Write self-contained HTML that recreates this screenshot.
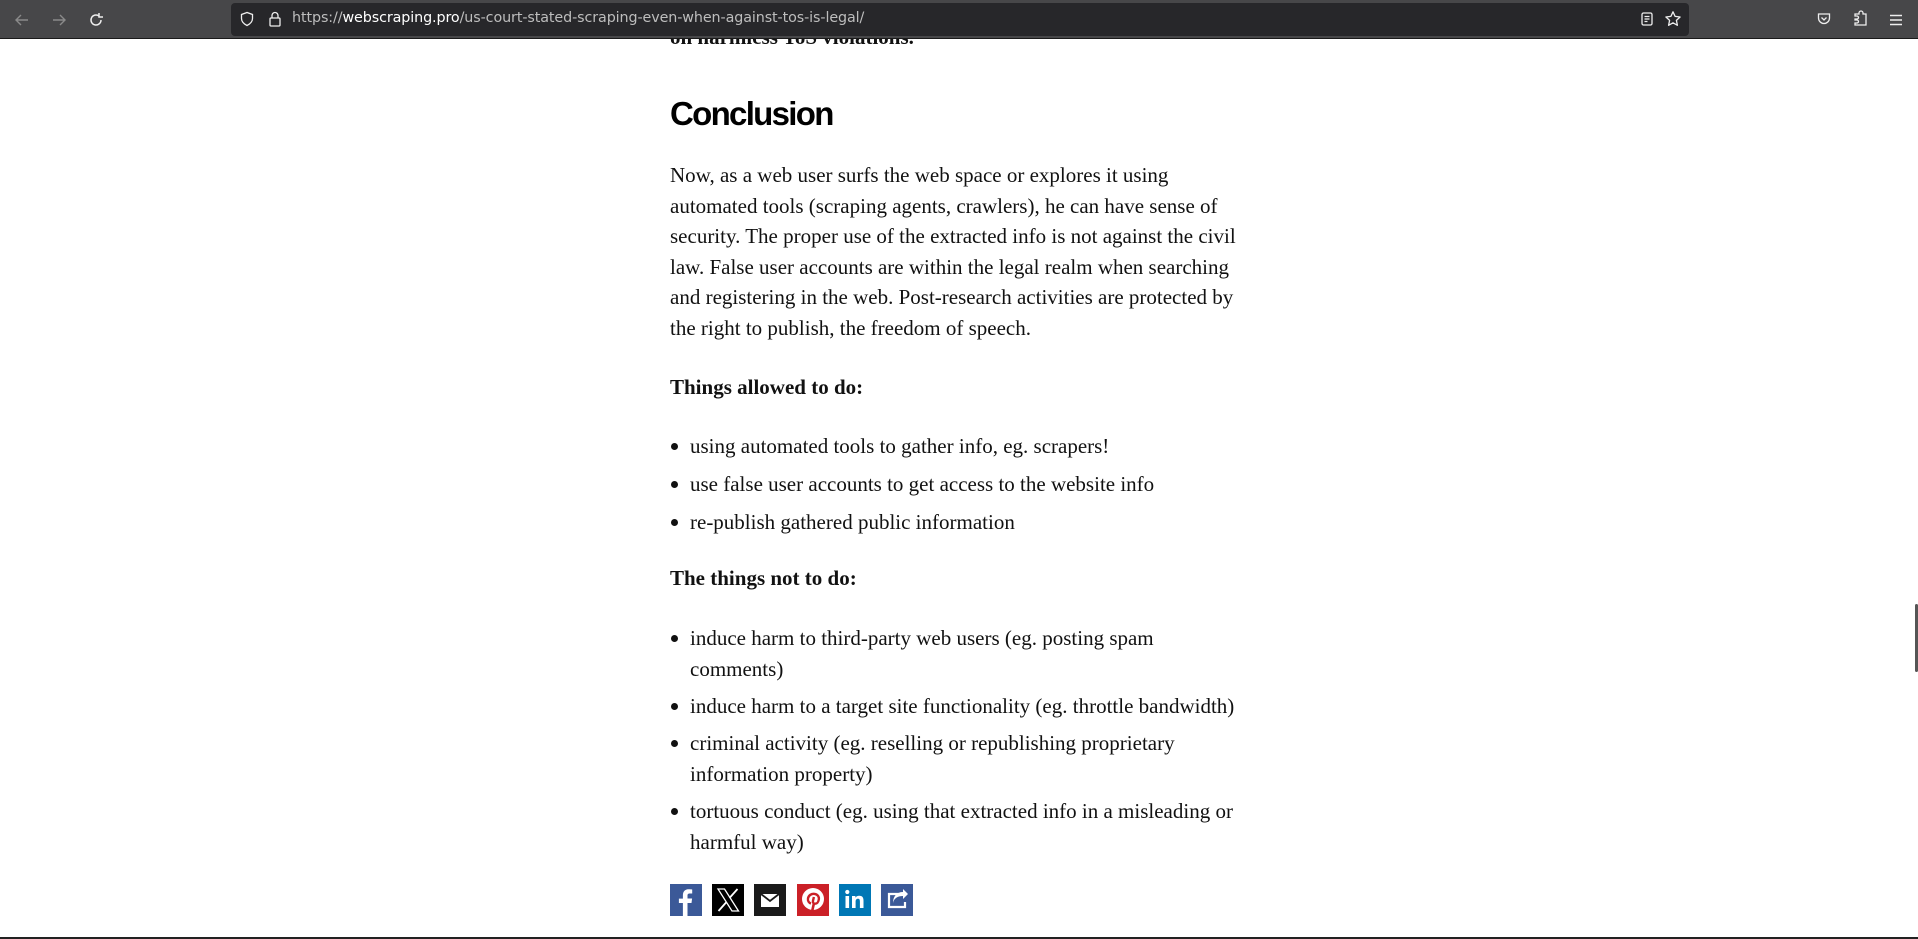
<!DOCTYPE html>
<html><head><meta charset="utf-8"><style>
*{margin:0;padding:0;box-sizing:border-box}
html,body{width:1918px;height:939px;overflow:hidden;background:#fff}
body{position:relative;font-family:"Liberation Serif",serif;color:#111;font-size:21px}
.bar{position:absolute;left:0;top:0;width:1918px;height:39px;background:#474749;border-bottom:1px solid #1a1a1a;z-index:5}
.url{position:absolute;left:231px;top:3px;width:1458px;height:33px;background:#27272a;border-radius:4px}
.urltxt{position:absolute;left:292px;top:10px;font-family:"DejaVu Sans","Liberation Sans",sans-serif;font-size:14.3px;color:#bdbdbd;letter-spacing:-0.1px}
.urltxt b{color:#fff;font-weight:normal}
.l{position:absolute;left:670px;line-height:30.6px;white-space:nowrap}
h2{position:absolute;left:670px;top:92px;font-family:"Liberation Sans",sans-serif;font-size:33px;font-weight:bold;letter-spacing:-1.7px;color:#000;line-height:44px}
.li{position:absolute;left:690px;line-height:30.6px;white-space:nowrap}
.li.b::before{content:"";position:absolute;left:-19px;top:12px;width:7px;height:7px;border-radius:50%;background:#111}
.ic{position:absolute;top:884px;width:32px;height:32px}
</style></head><body>
<div class="bar">
 <svg style="position:absolute;left:14px;top:12px" width="16" height="16" viewBox="0 0 16 16"><path d="M14 8H2M7 3L2 8l5 5" stroke="#8a8a8a" stroke-width="1.4" fill="none"/></svg>
 <svg style="position:absolute;left:51px;top:12px" width="16" height="16" viewBox="0 0 16 16"><path d="M2 8h12M9 3l5 5-5 5" stroke="#8a8a8a" stroke-width="1.4" fill="none"/></svg>
 <svg style="position:absolute;left:88px;top:12px" width="16" height="16" viewBox="0 0 16 16"><path d="M13 8a5 5 0 1 1-2-4M11 1v4h4" stroke="#eee" stroke-width="1.5" fill="none"/></svg>
 <div class="url"></div>
 <svg style="position:absolute;left:239px;top:11px" width="16" height="16" viewBox="0 0 16 16"><path d="M8 1.5L2.5 3.5v4c0 3.5 2.5 5.5 5.5 7 3-1.5 5.5-3.5 5.5-7v-4z" stroke="#eee" stroke-width="1.3" fill="none"/></svg>
 <svg style="position:absolute;left:268px;top:11px" width="14" height="16" viewBox="0 0 14 16"><rect x="2" y="7" width="10" height="8" rx="1" stroke="#eee" stroke-width="1.3" fill="none"/><path d="M4 7V4.5a3 3 0 0 1 6 0V7" stroke="#eee" stroke-width="1.3" fill="none"/></svg>
 <div class="urltxt">https://<b>webscraping.pro</b>/us-court-stated-scraping-even-when-against-tos-is-legal/</div>
 <svg style="position:absolute;left:1639px;top:11px" width="16" height="16" viewBox="0 0 16 16"><rect x="3" y="2" width="10" height="12" rx="1.5" stroke="#eee" stroke-width="1.3" fill="none"/><path d="M5.5 5.5h5M5.5 8h5M5.5 10.5h3" stroke="#eee" stroke-width="1.2"/></svg>
 <svg style="position:absolute;left:1664px;top:10px" width="18" height="18" viewBox="0 0 18 18"><path d="M9 1.8l2.1 4.6 5 .6-3.7 3.4 1 4.9L9 12.8l-4.4 2.5 1-4.9L1.9 7l5-.6z" stroke="#eee" stroke-width="1.3" fill="none" stroke-linejoin="round"/></svg>
 <svg style="position:absolute;left:1816px;top:11px" width="16" height="16" viewBox="0 0 16 16"><path d="M2.5 3h11v4a5.5 5.5 0 0 1-11 0z" stroke="#eee" stroke-width="1.3" fill="none"/><path d="M5.5 6.5L8 9l2.5-2.5" stroke="#eee" stroke-width="1.3" fill="none"/></svg>
 <svg style="position:absolute;left:1852px;top:10px" width="18" height="18" viewBox="0 0 18 18"><path d="M3 9h2a1.5 1.5 0 1 0 0-3H3V4h4V3a2 2 0 0 1 4 0v1h3v11H3v-2h2a1.5 1.5 0 1 0 0-3H3z" stroke="#eee" stroke-width="1.3" fill="none"/></svg>
 <svg style="position:absolute;left:1888px;top:12px" width="16" height="16" viewBox="0 0 16 16"><path d="M2 3.5h12M2 8h12M2 12.5h12" stroke="#eee" stroke-width="1.4"/></svg>
</div>
<div class="l" style="top:22px;font-weight:bold">on harmless ToS violations.</div>
<h2>Conclusion</h2>
<div class="l" style="top:160px">Now, as a web user surfs the web space or explores it using</div>
<div class="l" style="top:190.6px">automated tools (scraping agents, crawlers), he can have sense of</div>
<div class="l" style="top:221.2px">security. The proper use of the extracted info is not against the civil</div>
<div class="l" style="top:251.8px">law. False user accounts are within the legal realm when searching</div>
<div class="l" style="top:282.4px">and registering in the web. Post-research activities are protected by</div>
<div class="l" style="top:313px">the right to publish, the freedom of speech.</div>
<div class="l" style="top:372px;font-weight:bold">Things allowed to do:</div>
<div class="li b" style="top:431px">using automated tools to gather info, eg. scrapers!</div>
<div class="li b" style="top:469px">use false user accounts to get access to the website info</div>
<div class="li b" style="top:507px">re-publish gathered public information</div>
<div class="l" style="top:563px;font-weight:bold">The things not to do:</div>
<div class="li b" style="top:623px">induce harm to third-party web users (eg. posting spam</div>
<div class="li" style="top:654px">comments)</div>
<div class="li b" style="top:691px">induce harm to a target site functionality (eg. throttle bandwidth)</div>
<div class="li b" style="top:728px">criminal activity (eg. reselling or republishing proprietary</div>
<div class="li" style="top:759px">information property)</div>
<div class="li b" style="top:796px">tortuous conduct (eg. using that extracted info in a misleading or</div>
<div class="li" style="top:827px">harmful way)</div>

<svg class="ic" style="left:670px" viewBox="0 0 32 32"><rect width="32" height="32" fill="#3b5998"/><path d="M17.5 32V19h4l.6-4.5h-4.6v-2.8c0-1.3.4-2.2 2.3-2.2h2.4V5.5c-.4 0-1.8-.2-3.5-.2-3.5 0-5.8 2.1-5.8 6v3.3h-4V19h4v13z" fill="#fff"/></svg>
<svg class="ic" style="left:712px" viewBox="0 0 32 32"><rect width="32" height="32" fill="#000"/><path d="M6 5h6.5l14 22H20z" stroke="#fff" stroke-width="1.3" fill="none"/><path d="M25.5 5L17.5 14M6.5 27l8-9" stroke="#fff" stroke-width="1.8"/></svg>
<svg class="ic" style="left:754px" viewBox="0 0 32 32"><rect width="32" height="32" fill="#1a1a1a"/><rect x="7" y="10" width="18" height="13" fill="#fff"/><path d="M7 10l9 7 9-7" stroke="#1a1a1a" stroke-width="1.8" fill="none"/></svg>
<svg class="ic" style="left:797px" viewBox="0 0 32 32"><rect width="32" height="32" fill="#cb2027"/><circle cx="16" cy="15" r="11" fill="#fff"/><path d="M14.5 30l2.5-11" stroke="#cb2027" stroke-width="2.6"/><path d="M14 19.5c-2-.6-3.4-2.4-3-5 .5-3.3 3.6-5 6.6-4.6 3 .4 4.7 2.8 4.2 5.6-.4 2.6-2 4.4-4 4.2-1.4-.1-2.2-1.2-1.8-3l.9-3.7" stroke="#cb2027" stroke-width="2.4" fill="none"/></svg>
<svg class="ic" style="left:839px" viewBox="0 0 32 32"><rect width="32" height="32" fill="#0077b5"/><rect x="6.5" y="12" width="3.6" height="12" fill="#fff"/><circle cx="8.3" cy="8" r="2.1" fill="#fff"/><path d="M13 12h3.4v1.7c.7-1.2 2.1-2 3.8-2 3.4 0 4.3 2 4.3 5V24h-3.6v-6.5c0-1.6-.3-2.8-1.9-2.8-1.7 0-2.4 1.2-2.4 3V24H13z" fill="#fff"/></svg>
<svg class="ic" style="left:881px" viewBox="0 0 32 32"><rect width="32" height="32" fill="#3b5998"/><path d="M18 10H8v13h16v-5" stroke="#fff" stroke-width="2.2" fill="none"/><path d="M12 19c1-5 5-7 10-7v3l5-5-5-5v3c-6 0-10 4-10 11z" fill="#fff"/></svg>

<div style="position:absolute;left:0;top:937px;width:1918px;height:2px;background:#222"></div>
<div style="position:absolute;left:1915px;top:604px;width:3px;height:68px;background:#555;border-radius:2px"></div>
</body></html>
